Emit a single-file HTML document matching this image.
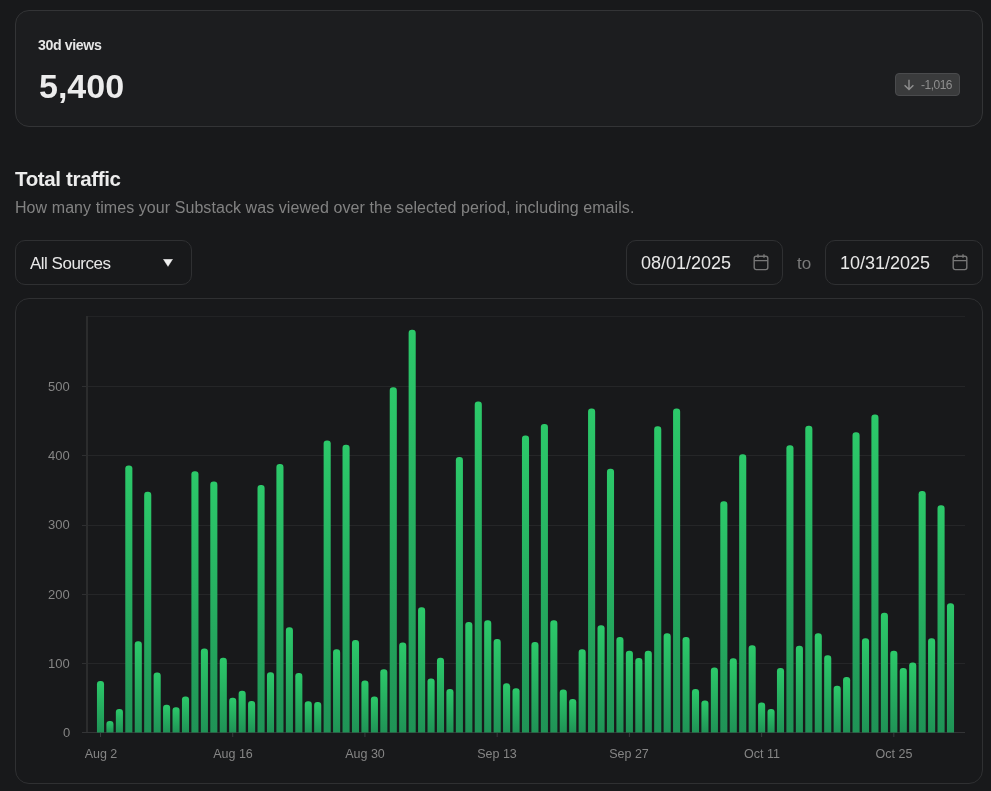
<!DOCTYPE html>
<html><head><meta charset="utf-8">
<style>
html,body{margin:0;padding:0;}
body{width:991px;height:791px;background:#18191b;position:relative;overflow:hidden;font-family:"Liberation Sans",sans-serif;color:#e8e8e8;}
.abs{position:absolute;}
.lbl,.big,.badge span,.h2,.sub,.sel span,.date span,.to,.yl,.xl{will-change:transform;}
.card1{position:absolute;left:15px;top:10px;width:966px;height:115px;border:1px solid #333436;border-radius:14px;background:#1c1d1f;}
.lbl{position:absolute;left:38px;top:37px;font-size:14.2px;letter-spacing:-0.4px;font-weight:bold;color:#e6e6e6;white-space:nowrap;}
.big{position:absolute;left:39px;top:67px;font-size:34px;font-weight:bold;color:#ececec;white-space:nowrap;}
.badge{position:absolute;left:895px;top:73px;width:63px;height:21px;border:1px solid #4a4b4d;border-radius:4px;background:#3a3b3c;}
.badge span{position:absolute;left:25px;top:4px;font-size:12px;letter-spacing:-0.5px;color:#8f8f8f;white-space:nowrap;}
.h2{position:absolute;left:15px;top:167px;font-size:20.5px;letter-spacing:-0.35px;font-weight:bold;color:#ececec;white-space:nowrap;}
.sub{position:absolute;left:15px;top:199px;font-size:16px;letter-spacing:0.07px;color:#828282;white-space:nowrap;}
.sel{position:absolute;left:15px;top:240px;width:175px;height:43px;border:1px solid #2f3032;border-radius:10px;background:transparent;}
.sel span{position:absolute;left:14px;top:13px;font-size:17px;letter-spacing:-0.5px;color:#e8e8e8;white-space:nowrap;}
.date{position:absolute;top:240px;width:156px;height:43px;border:1px solid #2f3032;border-radius:10px;background:transparent;}
.date span{position:absolute;left:14px;top:12px;font-size:18px;color:#e8e8e8;white-space:nowrap;}
.to{position:absolute;left:797px;top:254px;font-size:17px;color:#7a7a7a;}
.card2{position:absolute;left:15px;top:298px;width:966px;height:484px;border:1px solid #2f3032;border-radius:14px;background:#18191b;}
.yl{position:absolute;right:921px;font-size:13px;color:#858585;line-height:16px;white-space:nowrap;}
.xl{position:absolute;top:747px;width:100px;text-align:center;font-size:12.5px;color:#858585;white-space:nowrap;}
svg.chart{position:absolute;left:0;top:0;}
</style></head><body>
<div class="card1"></div>
<div class="lbl">30d views</div>
<div class="big">5,400</div>
<div class="badge">
<svg class="abs" style="left:7px;top:5px" width="12" height="12" viewBox="0 0 12 12"><path d="M6 0.8V10.6M1.6 6.2L6 10.6L10.4 6.2" fill="none" stroke="#8f8f8f" stroke-width="1.4"/></svg>
<span>-1,016</span></div>
<div class="h2">Total traffic</div>
<div class="sub">How many times your Substack was viewed over the selected period, including emails.</div>
<div class="sel"><span>All Sources</span>
<svg class="abs" style="left:147px;top:18px" width="10" height="8" viewBox="0 0 10 8"><path d="M0.4 0.2H9.6L5 7.4Z" fill="#f0f0f0" stroke="#f0f0f0" stroke-width="0.4" stroke-linejoin="round"/></svg></div>
<div class="date" style="left:626px;width:155px"><span>08/01/2025</span>
<svg class="abs" style="left:126px;top:13px" width="16" height="18" viewBox="0 0 16 18"><rect x="1.2" y="2.2" width="13.6" height="13.4" rx="2" fill="none" stroke="#777" stroke-width="1.4"/><path d="M1.2 6.6H14.8M5 0.3V3.8M11 0.3V3.8" stroke="#777" stroke-width="1.4"/></svg></div>
<div class="to">to</div>
<div class="date" style="left:825px"><span>10/31/2025</span>
<svg class="abs" style="left:126px;top:13px" width="16" height="18" viewBox="0 0 16 18"><rect x="1.2" y="2.2" width="13.6" height="13.4" rx="2" fill="none" stroke="#777" stroke-width="1.4"/><path d="M1.2 6.6H14.8M5 0.3V3.8M11 0.3V3.8" stroke="#777" stroke-width="1.4"/></svg></div>
<div class="card2"></div>
<svg class="chart" width="991" height="791" viewBox="0 0 991 791">
<defs><linearGradient id="g" x1="0" y1="0" x2="0" y2="1"><stop offset="0" stop-color="#2cc96a"/><stop offset="1" stop-color="#1f9356"/></linearGradient></defs>
<rect x="88" y="663" width="877" height="1" fill="#252628"/>
<rect x="82" y="663" width="5" height="1" fill="#2e2f31"/>
<rect x="88" y="594" width="877" height="1" fill="#252628"/>
<rect x="82" y="594" width="5" height="1" fill="#2e2f31"/>
<rect x="88" y="525" width="877" height="1" fill="#252628"/>
<rect x="82" y="525" width="5" height="1" fill="#2e2f31"/>
<rect x="88" y="455" width="877" height="1" fill="#252628"/>
<rect x="82" y="455" width="5" height="1" fill="#2e2f31"/>
<rect x="88" y="386" width="877" height="1" fill="#252628"/>
<rect x="82" y="386" width="5" height="1" fill="#2e2f31"/>
<rect x="88" y="316" width="877" height="1" fill="#222325"/>
<rect x="86" y="316" width="2" height="417" fill="#2b2c2d"/>
<rect x="82" y="732" width="883" height="1" fill="#333436"/>
<rect x="100.00" y="733" width="1" height="4" fill="#3a3b3d"/>
<rect x="232.22" y="733" width="1" height="4" fill="#3a3b3d"/>
<rect x="364.44" y="733" width="1" height="4" fill="#3a3b3d"/>
<rect x="496.67" y="733" width="1" height="4" fill="#3a3b3d"/>
<rect x="628.89" y="733" width="1" height="4" fill="#3a3b3d"/>
<rect x="761.11" y="733" width="1" height="4" fill="#3a3b3d"/>
<rect x="893.33" y="733" width="1" height="4" fill="#3a3b3d"/>
<g fill="url(#g)">
<path d="M96.95 732.5 V684.30 A3.20 3.20 0 0 1 100.15 681.10 H100.85 A3.20 3.20 0 0 1 104.05 684.30 V732.5 Z"/>
<path d="M106.39 732.5 V724.30 A3.20 3.20 0 0 1 109.59 721.10 H110.29 A3.20 3.20 0 0 1 113.49 724.30 V732.5 Z"/>
<path d="M115.84 732.5 V712.10 A3.20 3.20 0 0 1 119.04 708.90 H119.74 A3.20 3.20 0 0 1 122.94 712.10 V732.5 Z"/>
<path d="M125.28 732.5 V468.60 A3.20 3.20 0 0 1 128.48 465.40 H129.18 A3.20 3.20 0 0 1 132.38 468.60 V732.5 Z"/>
<path d="M134.73 732.5 V644.40 A3.20 3.20 0 0 1 137.93 641.20 H138.63 A3.20 3.20 0 0 1 141.83 644.40 V732.5 Z"/>
<path d="M144.17 732.5 V494.90 A3.20 3.20 0 0 1 147.37 491.70 H148.07 A3.20 3.20 0 0 1 151.27 494.90 V732.5 Z"/>
<path d="M153.62 732.5 V675.60 A3.20 3.20 0 0 1 156.82 672.40 H157.52 A3.20 3.20 0 0 1 160.72 675.60 V732.5 Z"/>
<path d="M163.06 732.5 V708.00 A3.20 3.20 0 0 1 166.26 704.80 H166.96 A3.20 3.20 0 0 1 170.16 708.00 V732.5 Z"/>
<path d="M172.51 732.5 V710.40 A3.20 3.20 0 0 1 175.71 707.20 H176.41 A3.20 3.20 0 0 1 179.61 710.40 V732.5 Z"/>
<path d="M181.95 732.5 V699.60 A3.20 3.20 0 0 1 185.15 696.40 H185.85 A3.20 3.20 0 0 1 189.05 699.60 V732.5 Z"/>
<path d="M191.39 732.5 V474.40 A3.20 3.20 0 0 1 194.59 471.20 H195.29 A3.20 3.20 0 0 1 198.49 474.40 V732.5 Z"/>
<path d="M200.84 732.5 V651.70 A3.20 3.20 0 0 1 204.04 648.50 H204.74 A3.20 3.20 0 0 1 207.94 651.70 V732.5 Z"/>
<path d="M210.28 732.5 V484.80 A3.20 3.20 0 0 1 213.48 481.60 H214.18 A3.20 3.20 0 0 1 217.38 484.80 V732.5 Z"/>
<path d="M219.73 732.5 V661.00 A3.20 3.20 0 0 1 222.93 657.80 H223.63 A3.20 3.20 0 0 1 226.83 661.00 V732.5 Z"/>
<path d="M229.17 732.5 V700.90 A3.20 3.20 0 0 1 232.37 697.70 H233.07 A3.20 3.20 0 0 1 236.27 700.90 V732.5 Z"/>
<path d="M238.62 732.5 V693.90 A3.20 3.20 0 0 1 241.82 690.70 H242.52 A3.20 3.20 0 0 1 245.72 693.90 V732.5 Z"/>
<path d="M248.06 732.5 V704.20 A3.20 3.20 0 0 1 251.26 701.00 H251.96 A3.20 3.20 0 0 1 255.16 704.20 V732.5 Z"/>
<path d="M257.51 732.5 V488.20 A3.20 3.20 0 0 1 260.71 485.00 H261.41 A3.20 3.20 0 0 1 264.61 488.20 V732.5 Z"/>
<path d="M266.95 732.5 V675.40 A3.20 3.20 0 0 1 270.15 672.20 H270.85 A3.20 3.20 0 0 1 274.05 675.40 V732.5 Z"/>
<path d="M276.39 732.5 V467.20 A3.20 3.20 0 0 1 279.59 464.00 H280.29 A3.20 3.20 0 0 1 283.49 467.20 V732.5 Z"/>
<path d="M285.84 732.5 V630.40 A3.20 3.20 0 0 1 289.04 627.20 H289.74 A3.20 3.20 0 0 1 292.94 630.40 V732.5 Z"/>
<path d="M295.28 732.5 V676.20 A3.20 3.20 0 0 1 298.48 673.00 H299.18 A3.20 3.20 0 0 1 302.38 676.20 V732.5 Z"/>
<path d="M304.73 732.5 V704.50 A3.20 3.20 0 0 1 307.93 701.30 H308.63 A3.20 3.20 0 0 1 311.83 704.50 V732.5 Z"/>
<path d="M314.17 732.5 V705.30 A3.20 3.20 0 0 1 317.37 702.10 H318.07 A3.20 3.20 0 0 1 321.27 705.30 V732.5 Z"/>
<path d="M323.62 732.5 V443.60 A3.20 3.20 0 0 1 326.82 440.40 H327.52 A3.20 3.20 0 0 1 330.72 443.60 V732.5 Z"/>
<path d="M333.06 732.5 V652.50 A3.20 3.20 0 0 1 336.26 649.30 H336.96 A3.20 3.20 0 0 1 340.16 652.50 V732.5 Z"/>
<path d="M342.51 732.5 V447.90 A3.20 3.20 0 0 1 345.71 444.70 H346.41 A3.20 3.20 0 0 1 349.61 447.90 V732.5 Z"/>
<path d="M351.95 732.5 V643.30 A3.20 3.20 0 0 1 355.15 640.10 H355.85 A3.20 3.20 0 0 1 359.05 643.30 V732.5 Z"/>
<path d="M361.39 732.5 V683.80 A3.20 3.20 0 0 1 364.59 680.60 H365.29 A3.20 3.20 0 0 1 368.49 683.80 V732.5 Z"/>
<path d="M370.84 732.5 V699.60 A3.20 3.20 0 0 1 374.04 696.40 H374.74 A3.20 3.20 0 0 1 377.94 699.60 V732.5 Z"/>
<path d="M380.28 732.5 V672.40 A3.20 3.20 0 0 1 383.48 669.20 H384.18 A3.20 3.20 0 0 1 387.38 672.40 V732.5 Z"/>
<path d="M389.73 732.5 V390.50 A3.20 3.20 0 0 1 392.93 387.30 H393.63 A3.20 3.20 0 0 1 396.83 390.50 V732.5 Z"/>
<path d="M399.17 732.5 V645.80 A3.20 3.20 0 0 1 402.37 642.60 H403.07 A3.20 3.20 0 0 1 406.27 645.80 V732.5 Z"/>
<path d="M408.62 732.5 V332.90 A3.20 3.20 0 0 1 411.82 329.70 H412.52 A3.20 3.20 0 0 1 415.72 332.90 V732.5 Z"/>
<path d="M418.06 732.5 V610.40 A3.20 3.20 0 0 1 421.26 607.20 H421.96 A3.20 3.20 0 0 1 425.16 610.40 V732.5 Z"/>
<path d="M427.51 732.5 V681.60 A3.20 3.20 0 0 1 430.71 678.40 H431.41 A3.20 3.20 0 0 1 434.61 681.60 V732.5 Z"/>
<path d="M436.95 732.5 V661.00 A3.20 3.20 0 0 1 440.15 657.80 H440.85 A3.20 3.20 0 0 1 444.05 661.00 V732.5 Z"/>
<path d="M446.39 732.5 V692.20 A3.20 3.20 0 0 1 449.59 689.00 H450.29 A3.20 3.20 0 0 1 453.49 692.20 V732.5 Z"/>
<path d="M455.84 732.5 V460.30 A3.20 3.20 0 0 1 459.04 457.10 H459.74 A3.20 3.20 0 0 1 462.94 460.30 V732.5 Z"/>
<path d="M465.28 732.5 V625.10 A3.20 3.20 0 0 1 468.48 621.90 H469.18 A3.20 3.20 0 0 1 472.38 625.10 V732.5 Z"/>
<path d="M474.73 732.5 V404.80 A3.20 3.20 0 0 1 477.93 401.60 H478.63 A3.20 3.20 0 0 1 481.83 404.80 V732.5 Z"/>
<path d="M484.17 732.5 V623.50 A3.20 3.20 0 0 1 487.37 620.30 H488.07 A3.20 3.20 0 0 1 491.27 623.50 V732.5 Z"/>
<path d="M493.62 732.5 V642.20 A3.20 3.20 0 0 1 496.82 639.00 H497.52 A3.20 3.20 0 0 1 500.72 642.20 V732.5 Z"/>
<path d="M503.06 732.5 V686.50 A3.20 3.20 0 0 1 506.26 683.30 H506.96 A3.20 3.20 0 0 1 510.16 686.50 V732.5 Z"/>
<path d="M512.51 732.5 V691.40 A3.20 3.20 0 0 1 515.71 688.20 H516.41 A3.20 3.20 0 0 1 519.61 691.40 V732.5 Z"/>
<path d="M521.95 732.5 V438.80 A3.20 3.20 0 0 1 525.15 435.60 H525.85 A3.20 3.20 0 0 1 529.05 438.80 V732.5 Z"/>
<path d="M531.39 732.5 V645.20 A3.20 3.20 0 0 1 534.59 642.00 H535.29 A3.20 3.20 0 0 1 538.49 645.20 V732.5 Z"/>
<path d="M540.84 732.5 V427.10 A3.20 3.20 0 0 1 544.04 423.90 H544.74 A3.20 3.20 0 0 1 547.94 427.10 V732.5 Z"/>
<path d="M550.28 732.5 V623.50 A3.20 3.20 0 0 1 553.48 620.30 H554.18 A3.20 3.20 0 0 1 557.38 623.50 V732.5 Z"/>
<path d="M559.73 732.5 V692.80 A3.20 3.20 0 0 1 562.93 689.60 H563.63 A3.20 3.20 0 0 1 566.83 692.80 V732.5 Z"/>
<path d="M569.17 732.5 V702.30 A3.20 3.20 0 0 1 572.37 699.10 H573.07 A3.20 3.20 0 0 1 576.27 702.30 V732.5 Z"/>
<path d="M578.62 732.5 V652.50 A3.20 3.20 0 0 1 581.82 649.30 H582.52 A3.20 3.20 0 0 1 585.72 652.50 V732.5 Z"/>
<path d="M588.06 732.5 V411.70 A3.20 3.20 0 0 1 591.26 408.50 H591.96 A3.20 3.20 0 0 1 595.16 411.70 V732.5 Z"/>
<path d="M597.51 732.5 V628.40 A3.20 3.20 0 0 1 600.71 625.20 H601.41 A3.20 3.20 0 0 1 604.61 628.40 V732.5 Z"/>
<path d="M606.95 732.5 V472.00 A3.20 3.20 0 0 1 610.15 468.80 H610.85 A3.20 3.20 0 0 1 614.05 472.00 V732.5 Z"/>
<path d="M616.39 732.5 V640.30 A3.20 3.20 0 0 1 619.59 637.10 H620.29 A3.20 3.20 0 0 1 623.49 640.30 V732.5 Z"/>
<path d="M625.84 732.5 V653.90 A3.20 3.20 0 0 1 629.04 650.70 H629.74 A3.20 3.20 0 0 1 632.94 653.90 V732.5 Z"/>
<path d="M635.28 732.5 V661.20 A3.20 3.20 0 0 1 638.48 658.00 H639.18 A3.20 3.20 0 0 1 642.38 661.20 V732.5 Z"/>
<path d="M644.73 732.5 V653.90 A3.20 3.20 0 0 1 647.93 650.70 H648.63 A3.20 3.20 0 0 1 651.83 653.90 V732.5 Z"/>
<path d="M654.17 732.5 V429.50 A3.20 3.20 0 0 1 657.37 426.30 H658.07 A3.20 3.20 0 0 1 661.27 429.50 V732.5 Z"/>
<path d="M663.62 732.5 V636.50 A3.20 3.20 0 0 1 666.82 633.30 H667.52 A3.20 3.20 0 0 1 670.72 636.50 V732.5 Z"/>
<path d="M673.06 732.5 V411.70 A3.20 3.20 0 0 1 676.26 408.50 H676.96 A3.20 3.20 0 0 1 680.16 411.70 V732.5 Z"/>
<path d="M682.51 732.5 V640.30 A3.20 3.20 0 0 1 685.71 637.10 H686.41 A3.20 3.20 0 0 1 689.61 640.30 V732.5 Z"/>
<path d="M691.95 732.5 V692.20 A3.20 3.20 0 0 1 695.15 689.00 H695.85 A3.20 3.20 0 0 1 699.05 692.20 V732.5 Z"/>
<path d="M701.39 732.5 V703.60 A3.20 3.20 0 0 1 704.59 700.40 H705.29 A3.20 3.20 0 0 1 708.49 703.60 V732.5 Z"/>
<path d="M710.84 732.5 V670.80 A3.20 3.20 0 0 1 714.04 667.60 H714.74 A3.20 3.20 0 0 1 717.94 670.80 V732.5 Z"/>
<path d="M720.28 732.5 V504.40 A3.20 3.20 0 0 1 723.48 501.20 H724.18 A3.20 3.20 0 0 1 727.38 504.40 V732.5 Z"/>
<path d="M729.73 732.5 V661.50 A3.20 3.20 0 0 1 732.93 658.30 H733.63 A3.20 3.20 0 0 1 736.83 661.50 V732.5 Z"/>
<path d="M739.17 732.5 V457.40 A3.20 3.20 0 0 1 742.37 454.20 H743.07 A3.20 3.20 0 0 1 746.27 457.40 V732.5 Z"/>
<path d="M748.62 732.5 V648.50 A3.20 3.20 0 0 1 751.82 645.30 H752.52 A3.20 3.20 0 0 1 755.72 648.50 V732.5 Z"/>
<path d="M758.06 732.5 V705.80 A3.20 3.20 0 0 1 761.26 702.60 H761.96 A3.20 3.20 0 0 1 765.16 705.80 V732.5 Z"/>
<path d="M767.51 732.5 V712.10 A3.20 3.20 0 0 1 770.71 708.90 H771.41 A3.20 3.20 0 0 1 774.61 712.10 V732.5 Z"/>
<path d="M776.95 732.5 V671.30 A3.20 3.20 0 0 1 780.15 668.10 H780.85 A3.20 3.20 0 0 1 784.05 671.30 V732.5 Z"/>
<path d="M786.39 732.5 V448.40 A3.20 3.20 0 0 1 789.59 445.20 H790.29 A3.20 3.20 0 0 1 793.49 448.40 V732.5 Z"/>
<path d="M795.84 732.5 V649.00 A3.20 3.20 0 0 1 799.04 645.80 H799.74 A3.20 3.20 0 0 1 802.94 649.00 V732.5 Z"/>
<path d="M805.28 732.5 V429.00 A3.20 3.20 0 0 1 808.48 425.80 H809.18 A3.20 3.20 0 0 1 812.38 429.00 V732.5 Z"/>
<path d="M814.73 732.5 V636.50 A3.20 3.20 0 0 1 817.93 633.30 H818.63 A3.20 3.20 0 0 1 821.83 636.50 V732.5 Z"/>
<path d="M824.17 732.5 V658.50 A3.20 3.20 0 0 1 827.37 655.30 H828.07 A3.20 3.20 0 0 1 831.27 658.50 V732.5 Z"/>
<path d="M833.62 732.5 V689.00 A3.20 3.20 0 0 1 836.82 685.80 H837.52 A3.20 3.20 0 0 1 840.72 689.00 V732.5 Z"/>
<path d="M843.06 732.5 V680.30 A3.20 3.20 0 0 1 846.26 677.10 H846.96 A3.20 3.20 0 0 1 850.16 680.30 V732.5 Z"/>
<path d="M852.51 732.5 V435.40 A3.20 3.20 0 0 1 855.71 432.20 H856.41 A3.20 3.20 0 0 1 859.61 435.40 V732.5 Z"/>
<path d="M861.95 732.5 V641.40 A3.20 3.20 0 0 1 865.15 638.20 H865.85 A3.20 3.20 0 0 1 869.05 641.40 V732.5 Z"/>
<path d="M871.39 732.5 V417.80 A3.20 3.20 0 0 1 874.59 414.60 H875.29 A3.20 3.20 0 0 1 878.49 417.80 V732.5 Z"/>
<path d="M880.84 732.5 V615.90 A3.20 3.20 0 0 1 884.04 612.70 H884.74 A3.20 3.20 0 0 1 887.94 615.90 V732.5 Z"/>
<path d="M890.28 732.5 V653.90 A3.20 3.20 0 0 1 893.48 650.70 H894.18 A3.20 3.20 0 0 1 897.38 653.90 V732.5 Z"/>
<path d="M899.73 732.5 V671.10 A3.20 3.20 0 0 1 902.93 667.90 H903.63 A3.20 3.20 0 0 1 906.83 671.10 V732.5 Z"/>
<path d="M909.17 732.5 V665.60 A3.20 3.20 0 0 1 912.37 662.40 H913.07 A3.20 3.20 0 0 1 916.27 665.60 V732.5 Z"/>
<path d="M918.62 732.5 V494.20 A3.20 3.20 0 0 1 921.82 491.00 H922.52 A3.20 3.20 0 0 1 925.72 494.20 V732.5 Z"/>
<path d="M928.06 732.5 V641.40 A3.20 3.20 0 0 1 931.26 638.20 H931.96 A3.20 3.20 0 0 1 935.16 641.40 V732.5 Z"/>
<path d="M937.51 732.5 V508.50 A3.20 3.20 0 0 1 940.71 505.30 H941.41 A3.20 3.20 0 0 1 944.61 508.50 V732.5 Z"/>
<path d="M946.95 732.5 V606.40 A3.20 3.20 0 0 1 950.15 603.20 H950.85 A3.20 3.20 0 0 1 954.05 606.40 V732.5 Z"/>
</g>
</svg>
<div class="yl" style="top:725.0px">0</div>
<div class="yl" style="top:655.8px">100</div>
<div class="yl" style="top:586.6px">200</div>
<div class="yl" style="top:517.4px">300</div>
<div class="yl" style="top:448.2px">400</div>
<div class="yl" style="top:379.0px">500</div>
<div class="xl" style="left:50.5px">Aug 2</div>
<div class="xl" style="left:182.7px">Aug 16</div>
<div class="xl" style="left:314.9px">Aug 30</div>
<div class="xl" style="left:447.2px">Sep 13</div>
<div class="xl" style="left:579.4px">Sep 27</div>
<div class="xl" style="left:711.6px">Oct 11</div>
<div class="xl" style="left:843.8px">Oct 25</div>
</body></html>
